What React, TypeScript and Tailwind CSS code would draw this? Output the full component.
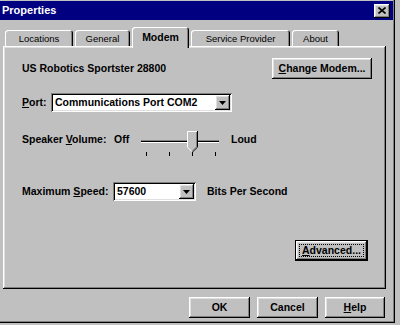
import React from "react";

const raised =
  "bg-[#c0c0c0] shadow-[inset_-1px_-1px_0_#000,inset_1px_1px_0_#fff,inset_-2px_-2px_0_#808080,inset_2px_2px_0_#dfdfdf]";
const sunken =
  "bg-white shadow-[inset_1px_1px_0_#808080,inset_-1px_-1px_0_#fff,inset_2px_2px_0_#000,inset_-2px_-2px_0_#dfdfdf]";

function Tab({ label, width, active }: { label: string; width: string; active?: boolean }) {
  return (
    <div
      className={`${width} ${
        active ? "h-[21px] -mb-[2px] z-10 font-bold text-[10.5px]" : "h-[16px] text-[9.5px]"
      } relative flex items-center justify-center rounded-t-[3px] bg-[#c0c0c0] shadow-[inset_1px_1px_0_#fff,inset_-1px_0_0_#000,inset_-2px_0_0_#808080]`}
    >
      {label}
    </div>
  );
}

function DropArrow() {
  return (
    <div className={`${raised} w-[15px] h-[15px] flex items-center justify-center`}>
      <svg width="7" height="4" viewBox="0 0 7 4">
        <path d="M0 0h7L3.5 4z" fill="#000" />
      </svg>
    </div>
  );
}

function Combo({ value, width }: { value: string; width: string }) {
  return (
    <div className={`${sunken} ${width} h-[19px] flex items-center justify-between pl-[4px] pr-[2px]`}>
      <span className="font-bold">{value}</span>
      <DropArrow />
    </div>
  );
}

function Button({ children, width, className = "" }: { children: React.ReactNode; width: string; className?: string }) {
  return (
    <div className={`${raised} ${width} h-[21px] flex items-center justify-center font-bold ${className}`}>
      {children}
    </div>
  );
}

function VolumeSlider() {
  return (
    <svg width="88" height="30" viewBox="0 0 88 30">
      {/* groove */}
      <line x1="4" y1="12.5" x2="82" y2="12.5" stroke="#808080" />
      <line x1="4" y1="13.5" x2="82" y2="13.5" stroke="#000" />
      <line x1="4" y1="14.5" x2="82" y2="14.5" stroke="#fff" />
      {/* ticks */}
      {[9, 32, 55, 78].map((x) => (
        <line key={x} x1={x + 0.5} y1="24" x2={x + 0.5} y2="28" stroke="#000" />
      ))}
      {/* thumb */}
      <path d="M50 3h10v16l-5 5l-5-5z" fill="#c0c0c0" />
      <path d="M50.5 19V3.5H60" fill="none" stroke="#fff" />
      <path d="M60.5 3v16.2L55 24.5" fill="none" stroke="#000" />
      <path d="M59.5 4v14.8L55 23.3" fill="none" stroke="#808080" />
      <path d="M50.5 19.2L55 23.7" fill="none" stroke="#fff" />
    </svg>
  );
}

export default function App() {
  return (
    <div className="w-[400px] h-[325px] bg-[#c0c0c0] font-['Liberation_Sans',Arial,sans-serif] text-black text-[10.5px] leading-[13px] overflow-hidden">
      <div className="w-[395px] h-[323px] flex flex-col shadow-[inset_-1px_-1px_0_#000,inset_-2px_-2px_0_#808080]">
        {/* title bar */}
        <div className="mt-[1px] mr-[2px] h-[19px] bg-[#000080] flex items-center justify-between pl-[2px] pr-[3px]">
          <span className="text-white font-bold text-[11px]">Properties</span>
          <div className={`${raised} w-[16px] h-[14px] flex items-center justify-center`}>
            <svg width="8" height="7" viewBox="0 0 8 7">
              <path d="M0.5 0.5l7 6M7.5 0.5l-7 6" stroke="#000" strokeWidth="1.6" />
            </svg>
          </div>
        </div>

        <div className="pl-[3px] pt-[7px] flex flex-col">
          {/* tabs */}
          <div className="h-[19px] flex items-end gap-[2px] pl-[2px]">
            <Tab label="Locations" width="w-[68px]" />
            <Tab label="General" width="w-[55px]" />
            <Tab label="Modem" width="w-[57px]" active />
            <Tab label="Service Provider" width="w-[99px]" />
            <Tab label="About" width="w-[47px]" />
          </div>

          {/* panel */}
          <div className={`${raised} w-[383px] h-[243px] flex flex-col pl-[19px] pr-[14px]`}>
            <div className="mt-[12px] flex items-center justify-between">
              <span className="font-bold">US Robotics Sportster 28800</span>
              <Button width="w-[100px]">
                <span className="underline">C</span>hange Modem...
              </Button>
            </div>

            <div className="mt-[14px] flex items-center">
              <span className="w-[29px] font-bold">
                <span className="underline">P</span>ort:
              </span>
              <Combo value="Communications Port COM2" width="w-[181px]" />
            </div>

            <div className="mt-[16px] flex items-start">
              <span className="w-[92px] mt-[5px] font-bold">
                Speaker <span className="underline">V</span>olume:
              </span>
              <span className="w-[23px] mt-[5px] font-bold">Off</span>
              <VolumeSlider />
              <span className="ml-[6px] mt-[5px] font-bold">Loud</span>
            </div>

            <div className="mt-[24px] flex items-center">
              <span className="w-[91px] font-bold">
                Maximum <span className="underline">S</span>peed:
              </span>
              <Combo value="57600" width="w-[83px]" />
              <span className="ml-[11px] font-bold">Bits Per Second</span>
            </div>

            <div className="mt-[39px] flex justify-end pr-[4px]">
              <div className="w-[73px] h-[21px] border border-black">
                <div className={`${raised} w-full h-full flex items-center justify-center p-[3px]`}>
                  <div className="w-full h-full border border-dotted border-black flex items-center justify-center font-bold">
                    <span>
                      <span className="underline">A</span>dvanced...
                    </span>
                  </div>
                </div>
              </div>
            </div>
          </div>

          {/* dialog buttons */}
          <div className="mt-[8px] w-[382px] flex justify-end gap-[7px]">
            <Button width="w-[61px]">OK</Button>
            <Button width="w-[61px]">Cancel</Button>
            <Button width="w-[60px]">
              <span className="underline">H</span>elp
            </Button>
          </div>
        </div>
      </div>
    </div>
  );
}
